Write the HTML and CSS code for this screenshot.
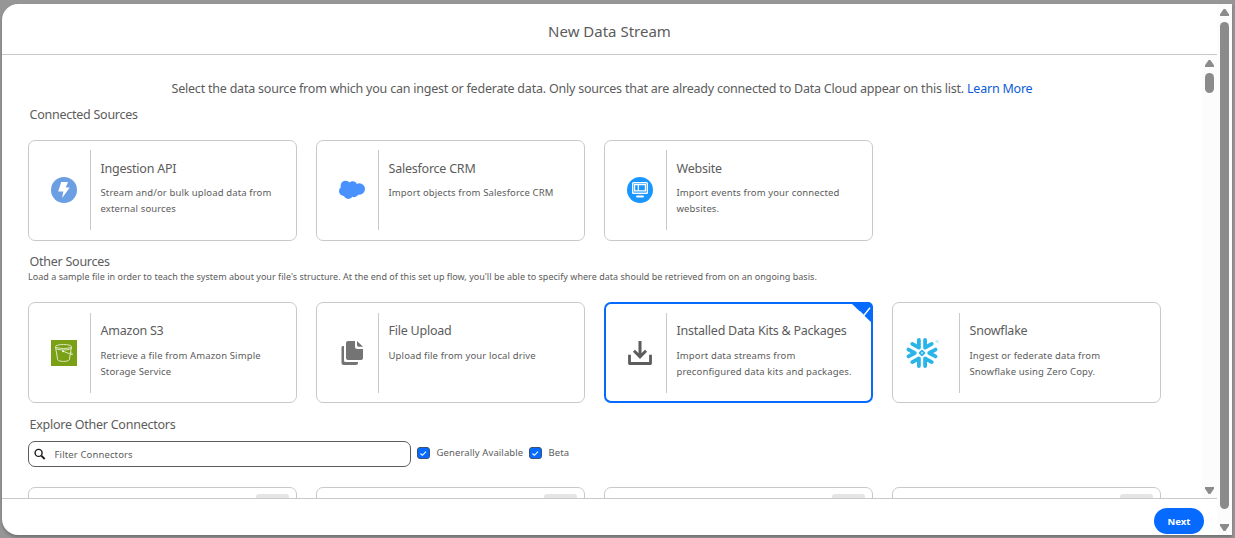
FILE: index.html
```
<!DOCTYPE html>
<html lang="en">
<head>
<meta charset="utf-8">
<title>New Data Stream</title>
<link rel="stylesheet" href="styles.css">
</head>
<body>
<div class="modal">
  <div class="panel">
    <header class="header"><h1>New Data Stream</h1></header>
    <div class="middle">
      <main class="content">
        <p class="intro">Select the data source from which you can ingest or federate data. Only sources that are already connected to Data Cloud appear on this list. <a class="link">Learn More</a></p>
        <h2 class="h-connected">Connected Sources</h2>
        <section class="cards">
          <article class="card">
            <div class="icon"><svg width="26" height="26" viewBox="0 0 26 26"><circle cx="13" cy="13" r="13" fill="#6b9ee2"/><path d="M10.2 5h6.800l-2.200 5.600h4L11.100 21l1.200-6.600H7.200z" fill="#fff"/></svg></div>
            <div class="text"><h3>Ingestion API</h3><p>Stream and/or bulk upload data from<br>external sources</p></div>
          </article>
          <article class="card">
            <div class="icon"><svg width="26" height="26" viewBox="0 0 26 26"><g fill="#4992fe"><circle cx="6.600" cy="8.800" r="5"/><circle cx="13.700" cy="8.800" r="4.500"/><circle cx="20.300" cy="12" r="5.700"/><circle cx="4.800" cy="14.200" r="4.800"/><circle cx="9.300" cy="17.200" r="4.700"/><circle cx="15" cy="15.400" r="4.800"/><path d="M6 8h12v9H6z"/></g></svg></div>
            <div class="text"><h3>Salesforce CRM</h3><p>Import objects from Salesforce CRM</p></div>
          </article>
          <article class="card">
            <div class="icon"><svg width="26" height="26" viewBox="0 0 26 26"><circle cx="13" cy="13" r="13" fill="#1b96ff"/><rect x="5" y="5" width="16" height="12" rx="1.500" fill="#fff"/><rect x="6.400" y="6.400" width="13.200" height="9.200" fill="#1b96ff"/><path d="M7.600 7.600h10.800v6.200H7.600zM11.300 7.600v6.200" fill="none" stroke="#fff" stroke-width="1.200"/><rect x="9" y="18.400" width="8" height="2.200" rx="1.100" fill="#fff"/></svg></div>
            <div class="text"><h3>Website</h3><p>Import events from your connected<br>websites.</p></div>
          </article>
        </section>
        <h2 class="h-other">Other Sources</h2>
        <p class="hint">Load a sample file in order to teach the system about your file's structure. At the end of this set up flow, you'll be able to specify where data should be retrieved from on an ongoing basis.</p>
        <section class="cards others">
          <article class="card">
            <div class="icon"><svg width="26" height="26" viewBox="0 0 26 26"><path fill="#7aa116" d="M0 0h26v26H0z"/><g fill="none" stroke="#e4edcf" stroke-width=".9"><ellipse cx="12.500" cy="6.500" rx="8" ry="2"/><path d="M4.500 7l2.200 12.800c1.500 2.200 10.200 2.200 11.600 0L20.500 7M4.800 8.600c3 1.800 12.500 1.700 15.400 0M12 11.200l8.200 3.200c2 .7 1.900-.8-.7-1.900"/></g><circle cx="12" cy="11.200" r="1" fill="#fff"/></svg></div>
            <div class="text"><h3>Amazon S3</h3><p>Retrieve a file from Amazon Simple<br>Storage Service</p></div>
          </article>
          <article class="card">
            <div class="icon"><svg width="26" height="26" viewBox="0 0 26 26"><g fill="#747474"><path d="M9 1h7v5.500A2.500 2.500 0 0 0 18.500 9H24v9a2 2 0 0 1-2 2H9a2 2 0 0 1-2-2V3a2 2 0 0 1 2-2z"/><path d="M18 1l6 5.700h-4.400A1.600 1.600 0 0 1 18 5.100zM4.200 6H5v14.500A1.500 1.500 0 0 0 6.500 22H19v1a2 2 0 0 1-2 2H4.500a2 2 0 0 1-2-2V7.700C2.500 6.700 3.200 6 4.200 6z"/></g></svg></div>
            <div class="text"><h3>File Upload</h3><p>Upload file from your local drive</p></div>
          </article>
          <article class="card selected">
            <div class="icon"><svg width="26" height="26" viewBox="0 0 26 26"><g fill="none" stroke="#5c5c5c" stroke-width="3"><path d="M13 1v15.500M7 10.800l6 6 6-6"/><path d="M2.500 14.800v8.700h21v-8.700" stroke-width="2.800" stroke-linejoin="round"/></g></svg></div>
            <div class="text"><h3>Installed Data Kits &amp; Packages</h3><p>Import data streams from<br>preconfigured data kits and packages.</p></div>
            <svg class="corner" width="23" height="22" viewBox="0 0 23 22"><path d="M0 0h18a5 5 0 0 1 5 5v17z" fill="#066afe"/><path d="M9.700 9.700l4 4L20 5.700" fill="none" stroke="#fff" stroke-width="1.500"/></svg>
          </article>
          <article class="card wide-icon">
            <div class="icon"><svg width="34" height="32" viewBox="0 0 34 32"><g fill="none" stroke="#29b5e8" stroke-width="3.800" stroke-linecap="round" stroke-linejoin="round"><path d="M12.900 2.900v7.800L6.300 6.900M19.100 2.900v7.800l6.600-3.800M12.900 29.100v-7.800l-6.600 3.800M19.100 29.100v-7.800l6.600 3.800M2.500 12.600L8.700 16l-6.200 3.400M29.500 12.600L23.300 16l6.200 3.400"/><path d="M16 13.700l2.300 2.300-2.300 2.300-2.300-2.300z" stroke-width="1.900"/></g><circle cx="31.300" cy="4.500" r="1" fill="none" stroke="#8ed5ef" stroke-width=".8"/></svg></div>
            <div class="text"><h3>Snowflake</h3><p>Ingest or federate data from<br>Snowflake using Zero Copy.</p></div>
          </article>
        </section>
        <h2 class="h-explore">Explore Other Connectors</h2>
        <div class="filters">
          <div class="search"><svg width="12" height="12" viewBox="0 0 12 12"><circle cx="4.600" cy="4.900" r="3.500" fill="none" stroke="#181818" stroke-width="1.400"/><path d="M7.300 7.600l3.400 3.400" stroke="#181818" stroke-width="1.800"/></svg><span>Filter Connectors</span></div>
          <div class="check"><svg width="13" height="12" viewBox="0 0 13 12"><rect x=".5" y=".5" width="12" height="11" rx="2.500" fill="#066afe" stroke="#3c5274"/><path d="M3.500 6.500l1.900 1.800 3.600-3.700" fill="none" stroke="#fff" stroke-width="1.100"/></svg><span class="t-ga">Generally Available</span></div>
          <div class="check"><svg width="13" height="12" viewBox="0 0 13 12"><rect x=".5" y=".5" width="12" height="11" rx="2.500" fill="#066afe" stroke="#3c5274"/><path d="M3.500 6.500l1.900 1.800 3.600-3.700" fill="none" stroke="#fff" stroke-width="1.100"/></svg><span>Beta</span></div>
        </div>
        <section class="cards more">
          <article class="card"><div class="tag"></div></article>
          <article class="card"><div class="tag"></div></article>
          <article class="card"><div class="tag"></div></article>
          <article class="card"><div class="tag"></div></article>
        </section>
      </main>
      <div class="bar inner"><i class="up"></i><i class="thumb"></i><i class="down"></i></div>
    </div>
    <footer class="footer"><button class="next">Next</button></footer>
  </div>
  <div class="bar outer"><i class="up"></i><i class="thumb"></i><i class="down"></i></div>
</div>
</body>
</html>
```
FILE: styles.css
```
* { box-sizing: border-box; }
body {
  margin: 0;
  height: 538px;
  padding: 4px 3px 3px 2px;
  overflow: hidden;
  background: #969696;
  color: #5c5c5c;
  font-family: "Noto Sans", sans-serif;
}
h1, h2, h3, p { margin: 0; font-weight: 400; white-space: nowrap; }
.modal {
  display: flex;
  height: 531px;
  background: #fff;
  border-radius: 16px 0 0 16px;
  overflow: hidden;
  box-shadow: 0 2px 3px rgba(0, 0, 0, .25);
}
.panel { flex: 1; min-width: 0; display: flex; flex-direction: column; }
.header { height: 51px; padding-top: 15px; border-bottom: 1px solid #c9c9c9; text-align: center; }
h1 { font-size: 15px; line-height: 24px; }
.middle { height: 443px; display: flex; overflow: hidden; }
.content { flex: 1; min-width: 0; padding: 24px 0 0 26px; overflow: hidden; }
.intro { height: 20px; margin-right: 26px; text-align: center; font-size: 12.5px; line-height: 20px; letter-spacing: -.217px; }
.link { color: #0b5cd6; }
h2 { height: 20px; padding-left: 1.500px; font-size: 12.5px; line-height: 20px; letter-spacing: -.25px; }
.h-connected { margin-top: 6px; }
.cards { display: grid; grid-template-columns: repeat(4, 269px); column-gap: 19px; margin-top: 15px; }
.card { position: relative; display: flex; height: 101px; padding-top: 9px; border: 1px solid #c9c9c9; border-radius: 7px; background: #fff; }
.icon { display: flex; align-items: center; width: 62px; height: 80px; padding-left: 22px; border-right: 1px solid #c9c9c9; }
.text { padding: 9px 0 0 9.500px; }
h3 { font-size: 12.5px; line-height: 20px; letter-spacing: -.23px; }
.text p { margin-top: 6px; font-size: 9.5px; line-height: 16px; letter-spacing: .13px; }
.h-other { margin-top: 11px; }
.hint { height: 12px; margin-top: -1px; font-size: 9px; line-height: 12px; letter-spacing: .026px; }
.others { margin-top: 19px; }
.others .card { padding-top: 10px; }
.others .text { padding-top: 8px; }
.others .text p { margin-top: 7px; }
.others .card.selected { padding: 9px 0 0; border: 2px solid #066afe; }
.selected .icon { width: 61px; padding-left: 21px; }
.corner { position: absolute; top: -2px; right: -2px; }
.wide-icon .icon { width: 67px; padding-left: 13px; }
.h-explore { margin-top: 12px; }
.filters { display: flex; margin-top: 6px; height: 26px; font-size: 9.5px; }
.search { display: flex; align-items: center; gap: 8.500px; width: 383px; padding-left: 5px; border: 1px solid #5c5c5c; border-radius: 7px; letter-spacing: .13px; }
.check { display: flex; align-items: flex-start; gap: 6.500px; margin-left: 6px; padding-top: 6px; line-height: 12px; letter-spacing: .1px; }
.check span { white-space: nowrap; }
.t-ga { width: 86.500px; }
.more { margin-top: 20px; }
.more .card { padding-top: 6px; }
.tag { width: 33px; height: 14px; margin-left: 227px; border-radius: 3px; background: #e5e5e5; }
.bar { flex: none; width: 15px; display: flex; flex-direction: column; align-items: center; background: #fcfcfc; }
.bar i { width: 9px; flex: none; background: #8b8b8b; }
.up, .down { height: 7px; clip-path: polygon(40% 0, 60% 0, 100% 75%, 100% 100%, 0 100%, 0 75%); }
.down { margin-top: auto; transform: rotate(180deg); }
.thumb { border-radius: 5px; margin-top: 6px; }
.bar { padding: 5px 0 4px; }
.inner .thumb { height: 20px; }
.outer .thumb { height: 487px; }
.footer { height: 37px; border-top: 1px solid #c9c9c9; display: flex; justify-content: flex-end; padding: 9px 13px 0 0; }
.next { width: 50px; height: 26px; padding: 0; border: 0; border-radius: 13px; background: #066afe; color: #fff; font: 700 9.5px "Noto Sans", sans-serif; }
```
